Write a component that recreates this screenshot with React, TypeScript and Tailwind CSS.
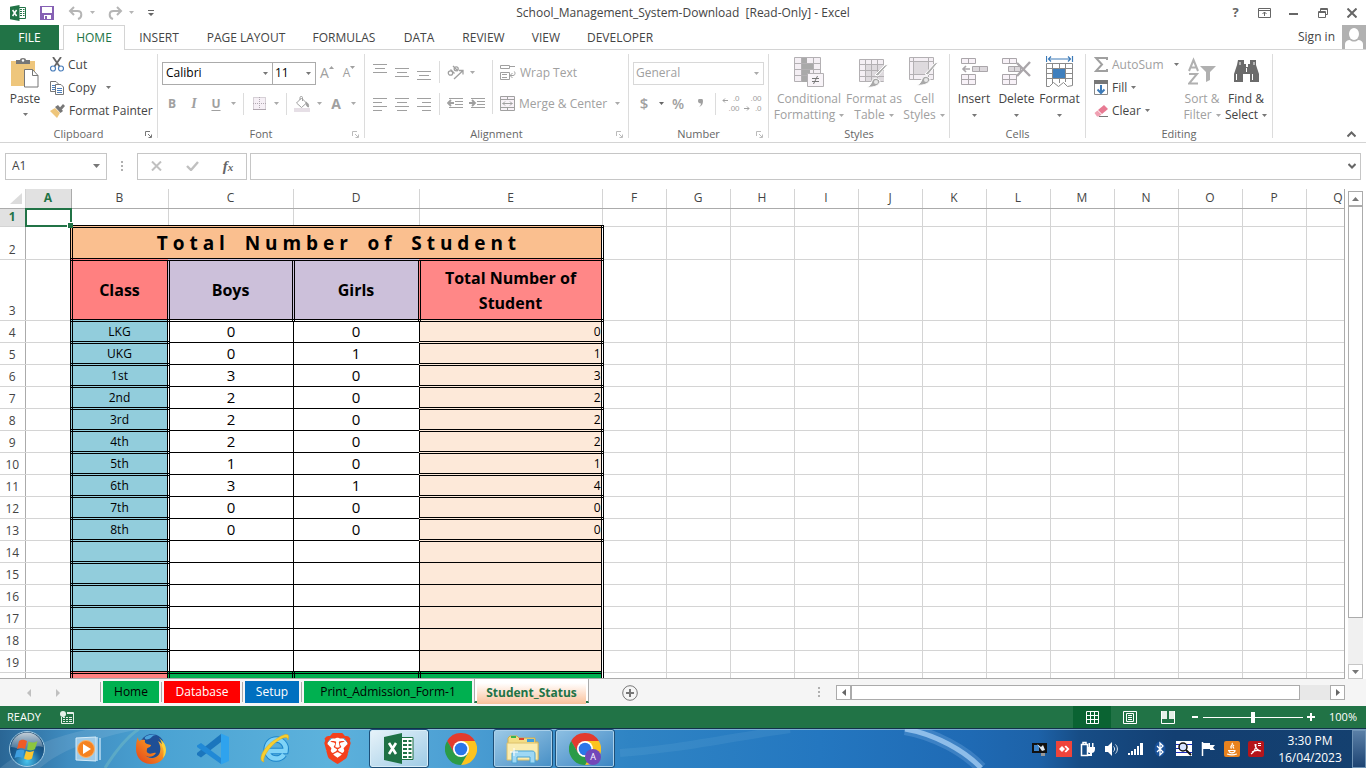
import React from 'react';
import { SiBrave } from 'react-icons/si';

const ribbonTabs = [
  { label: 'INSERT', width: 'w-[68px]' },
  { label: 'PAGE LAYOUT', width: 'w-[106px]' },
  { label: 'FORMULAS', width: 'w-[90px]' },
  { label: 'DATA', width: 'w-[60px]' },
  { label: 'REVIEW', width: 'w-[69px]' },
  { label: 'VIEW', width: 'w-[56px]' },
  { label: 'DEVELOPER', width: 'w-[92px]' },
];

const students = [
  { name: 'LKG', boys: 0, girls: 0, total: 0 },
  { name: 'UKG', boys: 0, girls: 1, total: 1 },
  { name: '1st', boys: 3, girls: 0, total: 3 },
  { name: '2nd', boys: 2, girls: 0, total: 2 },
  { name: '3rd', boys: 2, girls: 0, total: 2 },
  { name: '4th', boys: 2, girls: 0, total: 2 },
  { name: '5th', boys: 1, girls: 0, total: 1 },
  { name: '6th', boys: 3, girls: 1, total: 4 },
  { name: '7th', boys: 0, girls: 0, total: 0 },
  { name: '8th', boys: 0, girls: 0, total: 0 },
];

const emptyRows = [14, 15, 16, 17, 18, 19];
const extraCols = ['F', 'G', 'H', 'I', 'J', 'K', 'L', 'M', 'N', 'O', 'P', 'Q'];

const Caret = ({ className = 'text-[#777]' }: { className?: string }) => (
  <svg width="5" height="3" viewBox="0 0 5 3" className={`shrink-0 ${className}`}>
    <path d="M0 0h5L2.5 3z" fill="currentColor" />
  </svg>
);

const Divider = ({ className = 'h-[22px]' }: { className?: string }) => (
  <div className={`w-px shrink-0 bg-[#dcdcdc] ${className}`} />
);

interface ToolProps {
  label: string;
  width?: string;
  children: React.ReactNode;
}

const Tool = ({ label, width = 'w-[22px]', children }: ToolProps) => (
  <button aria-label={label} className={`flex h-[22px] shrink-0 items-center justify-center text-[#a0a0a0] ${width}`}>
    {children}
  </button>
);

const DropCaret = ({ label, dark = false }: { label: string; dark?: boolean }) => (
  <Tool label={label} width="w-3">
    <Caret className={dark ? 'text-[#666]' : 'text-[#aaa]'} />
  </Tool>
);

interface GroupProps {
  title: string;
  width: string;
  launcher?: 'on' | 'off';
  children: React.ReactNode;
}

const Group = ({ title, width, launcher, children }: GroupProps) => (
  <section className={`flex shrink-0 pt-1 ${width}`}>
    <div className="flex min-w-0 flex-1 flex-col">
      <div className="h-[74px]">{children}</div>
      <div className="flex h-3 items-center px-1">
        <span className="w-2" />
        <span className="flex-1 text-center text-[11px] leading-3 text-[#666]">{title}</span>
        <span className="w-2">
          {launcher && (
            <button aria-label={`${title} settings`} className={`block ${launcher === 'on' ? 'text-[#777]' : 'text-[#bbb]'}`}>
              <svg width="7" height="7" viewBox="0 0 7 7" fill="none" stroke="currentColor">
                <path d="M0.5 5V0.500H5M3 3l3 3M6.500 3.500v3h-3" />
              </svg>
            </button>
          )}
        </span>
      </div>
    </div>
    <Divider className="h-[84px]" />
  </section>
);

interface BigButtonProps {
  width: string;
  icon: React.ReactNode;
  line1: string;
  line2?: string;
  disabled?: boolean;
}

const BigButton = ({ width, icon, line1, line2, disabled }: BigButtonProps) => (
  <button className={`flex shrink-0 flex-col items-center pt-[2px] text-[12px] leading-4 ${width} ${disabled ? 'text-[#a0a0a0]' : 'text-[#444]'}`}>
    <span className="flex h-[35px] items-start">{icon}</span>
    <span className="whitespace-nowrap">{line1}</span>
    <span className="flex h-4 items-center gap-1 whitespace-nowrap">
      {line2}
      <Caret className={disabled ? 'text-[#aaa]' : 'text-[#777]'} />
    </span>
  </button>
);

const Lines = ({ rows }: { rows: [number, number, number][] }) => (
  <svg width="14" height="16" viewBox="0 0 14 16" stroke="currentColor">
    {rows.map(([x1, x2, y]) => (
      <path key={y} d={`M${x1} ${y + 0.5}H${x2}`} />
    ))}
  </svg>
);

/* ---------- Title bar ---------- */

const ExcelMark = () => (
  <svg width="16" height="16" viewBox="0 0 16 16">
    <path d="M9 2.5h6.5v11H9" fill="#fff" stroke="#217346" />
    <path d="M10 4.5h2M13 4.5h1.500M10 6.500h2M13 6.500h1.500M10 8.500h2M13 8.500h1.500M10 10.500h2M13 10.500h1.500" stroke="#217346" />
    <path d="M0 1.800L9.500 0v16L0 14.200z" fill="#217346" />
    <path d="M2.600 5l4 6M6.600 5l-4 6" stroke="#fff" strokeWidth="1.500" />
  </svg>
);

const TitleBar = () => (
  <header className="grid h-[25px] grid-cols-[1fr_auto_1fr] items-center">
    <div className="flex items-center pl-[10px] text-[#b5b5b5]">
      <ExcelMark />
      <button aria-label="Save" className="ml-[14px]">
        <svg width="14" height="14" viewBox="0 0 14 14">
          <path d="M0 0h14v14H0z" fill="#8661b4" />
          <path d="M2 1h10v6H2zM4 9h7v4H4z" fill="#fff" />
          <path d="M5 10h2v3H5z" fill="#8661b4" />
        </svg>
      </button>
      <button aria-label="Undo" className="ml-[14px]">
        <svg width="16" height="14" viewBox="0 0 16 14" fill="none" stroke="currentColor" strokeWidth="2">
          <path d="M6 1L2 5l4 4M2 5h7.500c5 0 5 6.500 0.500 8" />
        </svg>
      </button>
      <button aria-label="Undo list" className="ml-1 p-[2px]"><Caret className="text-[#b5b5b5]" /></button>
      <button aria-label="Redo" className="ml-[10px]">
        <svg width="16" height="14" viewBox="0 0 16 14" fill="none" stroke="currentColor" strokeWidth="2">
          <path d="M10 1l4 4-4 4M14 5H6.500c-5 0-5 6.500-0.500 8" />
        </svg>
      </button>
      <button aria-label="Redo list" className="ml-1 p-[2px]"><Caret className="text-[#b5b5b5]" /></button>
      <button aria-label="Customize toolbar" className="ml-[10px] p-[2px] text-[#666]">
        <svg width="6" height="6" viewBox="0 0 6 6"><path d="M0 0h6v1H0zM0 3h6L3 6z" fill="currentColor" /></svg>
      </button>
    </div>
    <h1 className="text-[12px] whitespace-pre text-[#444]">School_Management_System-Download  [Read-Only] - Excel</h1>
    <div className="flex justify-end text-[#666]">
      <button aria-label="Help" className="flex h-6 w-[29px] items-center justify-center text-[13px] font-bold">?</button>
      <button aria-label="Ribbon display options" className="flex h-6 w-[29px] items-center justify-center">
        <svg width="13" height="10" viewBox="0 0 13 10" fill="none" stroke="currentColor">
          <path d="M0.500 0.500h12v9H0.500zM1 2.500h11M6.500 8V4M4.500 6l2-2 2 2" />
        </svg>
      </button>
      <button aria-label="Minimize" className="flex h-6 w-[29px] items-center justify-center">
        <svg width="9" height="10" viewBox="0 0 9 10"><path d="M0 5h9v2H0z" fill="currentColor" /></svg>
      </button>
      <button aria-label="Restore" className="flex h-6 w-[29px] items-center justify-center">
        <svg width="10" height="10" viewBox="0 0 10 10" fill="none" stroke="currentColor">
          <path d="M2.500 3V0.500h7v6H7.500M0.500 3.500h7v6h-7zM2 1.500h8M0 4.500h8" />
        </svg>
      </button>
      <button aria-label="Close" className="flex h-6 w-[29px] items-center justify-center">
        <svg width="10" height="10" viewBox="0 0 10 10" stroke="currentColor" strokeWidth="2"><path d="M0.500 0.500l9 9M9.500 0.500l-9 9" /></svg>
      </button>
    </div>
  </header>
);

const RibbonTabs = () => (
  <nav className="flex h-[25px] text-[12px] text-[#444]">
    <button className="w-[59px] bg-[#217346] text-white">FILE</button>
    <div className="w-1 border-b border-[#d4d4d4]" />
    <button className="w-[62px] border border-b-0 border-[#d4d4d4] text-[#217346]">HOME</button>
    {ribbonTabs.map((tab) => (
      <button key={tab.label} className={`border-b border-[#d4d4d4] pt-[2px] whitespace-nowrap ${tab.width}`}>{tab.label}</button>
    ))}
    <div className="flex flex-1 items-center justify-end border-b border-[#d4d4d4]">
      <button className="mr-[7px]">Sign in</button>
      <svg width="24" height="24" viewBox="0 0 24 24">
        <path d="M0 0h24v24H0z" fill="#b1b1b1" />
        <ellipse cx="12" cy="9" rx="5" ry="6" fill="#fff" />
        <path d="M3 24v-5c0-2 2-4 5-4 2 2 6 2 8 0 3 0 5 2 5 4v5z" fill="#fff" />
      </svg>
    </div>
  </nav>
);

/* ---------- Ribbon groups ---------- */

const ClipboardGroup = () => (
  <Group title="Clipboard" width="w-[158px]" launcher="on">
    <div className="flex">
      <button className="flex w-[50px] flex-col items-center pt-1 text-[12px] leading-4 text-[#444]">
        <svg width="28" height="30" viewBox="0 0 28 30">
          <path d="M0 3h24v25H0z" fill="#eec67c" />
          <path d="M5 6V2h4a3 2 0 0 1 6 0h4v4z" fill="#777" />
          <circle cx="12" cy="2.500" r="1.200" fill="#fff" />
          <path d="M13.500 11.500h8l5.500 6v11.500H13.500z" fill="#fff" stroke="#777" />
          <path d="M21.500 11.500v6H27" fill="none" stroke="#777" />
        </svg>
        <span className="mt-[3px]">Paste</span>
        <span className="flex h-[14px] items-center"><Caret /></span>
      </button>
      <div className="flex flex-col text-[12px] text-[#444]">
        <button className="flex h-[21px] items-center gap-1">
          <svg width="14" height="15" viewBox="0 0 14 15" fill="none">
            <path d="M3 0l6.500 9.500M11 0L4.500 9.500" stroke="#666" strokeWidth="1.800" />
            <circle cx="3" cy="11.500" r="2.500" stroke="#4a7ebb" strokeWidth="1.200" />
            <circle cx="11" cy="11.500" r="2.500" stroke="#4a7ebb" strokeWidth="1.200" />
          </svg>
          Cut
        </button>
        <button className="flex h-[25px] items-center gap-1">
          <svg width="14" height="14" viewBox="0 0 14 14" fill="#fff">
            <path d="M0.500 0.500H6L8.500 3v7.500h-8z" stroke="#777" />
            <path d="M2 4.500h4M2 6.500h4M2 8.500h4" stroke="#4a7ebb" />
            <path d="M5.500 3.500H11L13.500 6v7.500h-8z" stroke="#777" />
            <path d="M7 7.500h5M7 9.500h5M7 11.500h5" stroke="#4a7ebb" />
          </svg>
          Copy
          <Caret className="ml-[6px] text-[#777]" />
        </button>
        <button className="flex h-[21px] items-center gap-1 whitespace-nowrap">
          <svg width="15" height="14" viewBox="0 0 15 14">
            <path d="M0 7l5-3 5 5-3 5z" fill="#eec67c" />
            <path d="M5 3l3-2 5 6-2.500 2z" fill="#777" />
            <path d="M9.500 4L13 0l2 2-3.500 4z" fill="#777" />
          </svg>
          Format Painter
        </button>
      </div>
    </div>
  </Group>
);

const FontGroup = () => (
  <Group title="Font" width="w-[207px]" launcher="off">
    <div className="flex h-[36px] items-center pt-[2px] pl-1">
      <div className="flex h-[23px] w-[111px] items-center border border-[#ababab] pr-1">
        <select aria-label="Font name" className="min-w-0 flex-1 appearance-none pl-[3px] text-[12px] text-black outline-none">
          <option>Calibri</option>
        </select>
        <Caret />
      </div>
      <div className="-ml-px flex h-[23px] w-11 items-center border border-[#ababab] pr-1">
        <select aria-label="Font size" className="min-w-0 flex-1 appearance-none pl-[2px] text-[12px] text-black outline-none">
          <option>11</option>
        </select>
        <Caret />
      </div>
      <Tool label="Increase font size">
        <span className="text-[14px] leading-none">A</span>
        <svg width="5" height="14" viewBox="0 0 5 14"><path d="M0 3h5L2.500 0z" fill="currentColor" /></svg>
      </Tool>
      <Tool label="Decrease font size">
        <span className="text-[12px] leading-none">A</span>
        <svg width="5" height="14" viewBox="0 0 5 14"><path d="M0 0h5L2.500 3z" fill="currentColor" /></svg>
      </Tool>
    </div>
    <div className="flex h-[27px] items-center pl-[3px]">
      <Tool label="Bold"><b className="text-[12px]">B</b></Tool>
      <Tool label="Italic"><i className="font-['Liberation_Serif',serif] text-[14px] font-bold">I</i></Tool>
      <Tool label="Underline"><span className="text-[12px] font-bold underline underline-offset-2">U</span></Tool>
      <DropCaret label="Underline style" />
      <Divider className="mx-1 h-[22px]" />
      <Tool label="Borders">
        <svg width="13" height="13" viewBox="0 0 13 13" fill="none" stroke="#b0a8b0">
          <path d="M0.500 0.500h12v12H0.500z" fill="#f6f0f6" strokeDasharray="1 1" />
          <path d="M6.500 0v13M0 6.500h13" strokeDasharray="1 1" />
          <path d="M0 12.500h13" />
        </svg>
      </Tool>
      <DropCaret label="Border style" />
      <Divider className="mx-1 h-[22px]" />
      <Tool label="Fill color">
        <svg width="16" height="16" viewBox="0 0 16 16" fill="none" stroke="currentColor">
          <path d="M0 12h16v4H0z" fill="#e6dfe6" stroke="none" />
          <path d="M2.500 7l5-5 5 5-5 4.500zM6 4V1.500C6 0 8.500 0 8.500 1.500V5" />
          <path d="M12 6c2 1 3 3 2.500 5-1.500 0-2.500-2-2.500-5z" fill="currentColor" />
        </svg>
      </Tool>
      <DropCaret label="Fill color list" />
      <Tool label="Font color"><b className="text-[14px]">A</b></Tool>
      <DropCaret label="Font color list" />
    </div>
  </Group>
);

const AlignmentGroup = () => (
  <Group title="Alignment" width="w-[264px]" launcher="off">
    <div className="flex">
      <div className="w-[127px] pl-1">
        <div className="flex h-[36px] items-center">
          <Tool label="Top align"><Lines rows={[[0, 14, 0], [2, 12, 4], [0, 14, 8]]} /></Tool>
          <Tool label="Middle align"><Lines rows={[[0, 14, 4], [2, 12, 8], [0, 14, 12]]} /></Tool>
          <Tool label="Bottom align"><Lines rows={[[0, 14, 7], [2, 12, 11], [0, 14, 15]]} /></Tool>
          <Divider className="mx-1 h-[22px]" />
          <Tool label="Orientation">
            <svg width="17" height="15" viewBox="0 0 17 15" fill="none" stroke="currentColor" strokeWidth="1.300">
              <circle cx="3.500" cy="8" r="2.200" />
              <path d="M3.500 4.500l4 4M6 1l5 5" />
              <circle cx="9.200" cy="3.800" r="2" />
              <path d="M7 14l8.500-8M12 5.500h4V9.500" />
            </svg>
          </Tool>
          <DropCaret label="Orientation list" />
        </div>
        <div className="flex h-[27px] items-center">
          <Tool label="Align left"><Lines rows={[[0, 14, 2], [0, 9, 6], [0, 14, 10], [0, 9, 14]]} /></Tool>
          <Tool label="Align center"><Lines rows={[[0, 14, 2], [2, 12, 6], [0, 14, 10], [2, 12, 14]]} /></Tool>
          <Tool label="Align right"><Lines rows={[[0, 14, 2], [5, 14, 6], [0, 14, 10], [5, 14, 14]]} /></Tool>
          <Divider className="mx-1 h-[22px]" />
          <Tool label="Decrease indent">
            <svg width="16" height="12" viewBox="0 0 16 12" fill="none" stroke="currentColor">
              <path d="M2 0.500h14M8 3.500h8M8 6.500h8M2 9.500h14" />
              <path d="M7 5H1M4 2L1 5l3 3" strokeWidth="1.800" />
            </svg>
          </Tool>
          <Tool label="Increase indent">
            <svg width="16" height="12" viewBox="0 0 16 12" fill="none" stroke="currentColor">
              <path d="M2 0.500h14M8 3.500h8M8 6.500h8M2 9.500h14" />
              <path d="M0 5h6M3 2l3 3-3 3" strokeWidth="1.800" />
            </svg>
          </Tool>
        </div>
      </div>
      <Divider className="mt-[6px] h-[54px]" />
      <div className="flex-1 pl-[7px] text-[12px] text-[#a0a0a0]">
        <button className="flex h-[36px] items-center gap-1 pt-[2px]">
          <svg width="16" height="16" viewBox="0 0 16 16" fill="none" stroke="currentColor">
            <path d="M0.500 0.500h9v3h-9zM0.500 7.500h9v7h-9zM2 9.500h5M2 12.500h5M10 1.500h5M10 10.500h3c3 0 2-4 1-4M12.500 8l-2.500 2.500 2.500 2.500" />
          </svg>
          Wrap Text
        </button>
        <div className="flex h-[27px] items-center">
          <button className="flex items-center gap-1 whitespace-nowrap">
            <svg width="15" height="15" viewBox="0 0 15 15" fill="none" stroke="currentColor">
              <path d="M0.500 0.500h14v14H0.500z" fill="#f8f2f8" />
              <path d="M0 3.500h15M0 11.500h15M7.500 0v3.500M7.500 11.500V15M2.500 7.500h10M5 5.500l-2 2 2 2M10 5.500l2 2-2 2" />
            </svg>
            Merge &amp; Center
          </button>
          <span className="flex-1" />
          <DropCaret label="Merge options" />
          <span className="w-[5px]" />
        </div>
      </div>
    </div>
  </Group>
);

const NumberGroup = () => (
  <Group title="Number" width="w-[140px]" launcher="off">
    <div className="flex h-[36px] items-center pt-[2px] pl-1">
      <div className="flex h-[23px] w-[131px] items-center border border-[#d8d8d8] pr-1">
        <select aria-label="Number format" className="min-w-0 flex-1 appearance-none pl-[2px] text-[12px] text-[#a0a0a0] outline-none">
          <option>General</option>
        </select>
        <Caret className="text-[#aaa]" />
      </div>
    </div>
    <div className="flex h-[27px] items-center pl-1">
      <Tool label="Currency"><span className="text-[15px] font-semibold">$</span></Tool>
      <DropCaret label="Currency list" dark />
      <Tool label="Percent"><span className="text-[14px] font-semibold">%</span></Tool>
      <Tool label="Comma style">
        <svg width="5" height="9" viewBox="0 0 5 9"><path d="M0 2a2 2 0 0 1 5 0c0 3-1 5-4 6 1-1 2-2 2-3.500C1 4.500 0 3.500 0 2z" fill="currentColor" /></svg>
      </Tool>
      <Divider className="mx-1 h-[22px]" />
      <Tool label="Increase decimal">
        <svg width="6" height="14" viewBox="0 0 6 14" fill="none" stroke="currentColor"><path d="M6 3.500H1M3 1.500l-2 2 2 2" /></svg>
        <span className="flex flex-col items-end font-['Liberation_Sans',sans-serif] text-[8px] leading-[10px]"><span>.0</span><span>.00</span></span>
      </Tool>
      <Tool label="Decrease decimal">
        <svg width="6" height="14" viewBox="0 0 6 14" fill="none" stroke="currentColor"><path d="M0 11.500h5M3 9.500l2 2-2 2" /></svg>
        <span className="flex flex-col items-end font-['Liberation_Sans',sans-serif] text-[8px] leading-[10px]"><span>.00</span><span>.0</span></span>
      </Tool>
    </div>
  </Group>
);

const StylesGroup = () => (
  <Group title="Styles" width="w-[181px]">
    <div className="flex pl-[3px]">
      <BigButton
        width="w-[74px]"
        line1="Conditional"
        line2="Formatting"
        disabled
        icon={
          <svg width="30" height="31" viewBox="0 0 30 31" fill="none" stroke="#b3b0b3">
            <path d="M0.500 1.500h26v24H0.500z" fill="#f4eff4" />
            <path d="M8 2h5v6H8zM8 8h11v6H8zM8 14h8v6H8zM8 20h5v6H8z" fill="#a9a9a9" stroke="none" />
            <path d="M0 7.500h27M0 13.500h27M0 19.500h27M7.500 1v25M19.500 1v25" />
            <path d="M13.500 17.500h16v13h-16z" fill="#f8f4f8" />
            <path d="M18 22.500h7M18 25.500h7M23.500 20l-4 8" stroke="#777" />
          </svg>
        }
      />
      <BigButton
        width="w-[56px]"
        line1="Format as"
        line2="Table"
        disabled
        icon={
          <svg width="30" height="32" viewBox="0 0 30 32" fill="none" stroke="#b3b0b3">
            <path d="M0.500 3.500h24v22h-24z" fill="#f4eff4" />
            <path d="M7 9h18v16H7z" fill="#dedade" stroke="none" />
            <path d="M0 8.500h25M0 14.500h25M0 20.500h25M6.500 3v23M12.500 3v23M18.500 3v23" />
            <path d="M29.500 8L19 20l-3-1 10-10z" fill="#b0b0b0" stroke="#fff" />
            <path d="M8 31c3-1 4-3 5-6s5-4 8 0c0 4-6 7-13 6z" fill="#a9a9a9" stroke="#fff" />
            <circle cx="17" cy="26" r="2" fill="#e8e8e8" stroke="none" />
          </svg>
        }
      />
      <BigButton
        width="w-[44px]"
        line1="Cell"
        line2="Styles"
        disabled
        icon={
          <svg width="30" height="31" viewBox="0 0 30 31" fill="none" stroke="#b3b0b3">
            <path d="M0.500 1.500h24v22h-24z" fill="#f4eff4" />
            <path d="M5 6h15v13H5z" fill="#dedade" stroke="none" />
            <path d="M0 5.500h25M0 18.500h25M4.500 1v23M19.500 1v23" />
            <path d="M29.500 6L19 19l-3-1 10-11z" fill="#b0b0b0" stroke="#fff" />
            <path d="M8 29c3-1 4-3 5-6s5-4 8 0c0 4-6 7-13 6z" fill="#a9a9a9" stroke="#fff" />
            <circle cx="17" cy="24" r="2" fill="#e8e8e8" stroke="none" />
          </svg>
        }
      />
    </div>
  </Group>
);

const CellsGroup = () => (
  <Group title="Cells" width="w-[136px]">
    <div className="flex pl-[3px]">
      <BigButton
        width="w-[42px]"
        line1="Insert"
        icon={
          <svg width="27" height="29" viewBox="0 0 27 29" fill="none" stroke="#aaa6aa">
            <path d="M0.500 2.500h14v5h-14zM7.500 2v6M0.500 18.500h14v10h-14zM0 23.500h15M7.500 18v11" fill="#f8f2f8" />
            <path d="M11.500 10.500h15v5h-15zM18.500 10v6" fill="#dcd8dc" />
            <path d="M9 13H2M5 10l-3 3 3 3" strokeWidth="1.600" />
          </svg>
        }
      />
      <BigButton
        width="w-[43px]"
        line1="Delete"
        icon={
          <svg width="29" height="29" viewBox="0 0 29 29" fill="none" stroke="#aaa6aa">
            <path d="M0.500 2.500h14v5h-14zM7.500 2v6M0.500 18.500h14v10h-14zM0 23.500h15M7.500 18v11" fill="#f8f2f8" />
            <path d="M6.500 10.500h12v5h-12zM12.500 10v6" fill="#dcd8dc" />
            <path d="M15 7l13 13M28 6L15 20" strokeWidth="2.400" />
          </svg>
        }
      />
      <BigButton
        width="w-[43px]"
        line1="Format"
        icon={
          <svg width="28" height="32" viewBox="0 0 28 32" fill="none" stroke="#8a8a8a">
            <path d="M0.500 0v6M26.500 0v6M2 3h23M5 0.500L2.500 3 5 5.500M22 0.500L24.500 3 22 5.500" stroke="#3c7ab8" strokeWidth="1.200" />
            <path d="M0.500 7.500h26v22l-5 1-4-4-5 4-5-4-4 4h-3z" fill="#fff" />
            <path d="M7 12h12v10H7z" fill="#3f7fbd" stroke="none" />
            <path d="M0 12.500h27M0 17.500h7M19 17.500h8M0 22.500h27M6.500 8v19M19.500 8v18M13.500 8v4M13.500 22v5" />
          </svg>
        }
      />
    </div>
  </Group>
);

const EditingGroup = () => (
  <Group title="Editing" width="w-[187px]">
    <div className="flex">
      <div className="flex w-[94px] flex-col pl-[8px] text-[12px] text-[#444]">
        <button className="flex h-[21px] items-center gap-1 text-[#a0a0a0]">
          <svg width="14" height="15" viewBox="0 0 14 15" fill="none" stroke="currentColor" strokeWidth="2">
            <path d="M13 3V1H2l6 6.500L2 14h11v-2" />
          </svg>
          AutoSum
          <Caret className="ml-[6px] text-[#777]" />
        </button>
        <button className="flex h-[25px] items-center gap-1">
          <svg width="14" height="15" viewBox="0 0 14 15" fill="none">
            <path d="M0.500 0.500h13v14H0.500z" stroke="#888" />
            <path d="M0 0h14v4H0z" fill="#777" />
            <path d="M7 5v8M3.500 9.500L7 13l3.500-3.500" stroke="#3c7ab8" strokeWidth="2" />
          </svg>
          Fill
          <Caret />
        </button>
        <button className="flex h-[21px] items-center gap-1">
          <svg width="14" height="12" viewBox="0 0 14 12">
            <path d="M4 5l6-5 4 4-6 5z" fill="#e87a93" />
            <path d="M0.500 8L3.500 5.500l4 4L5 11.500H3z" fill="#f0a0b2" />
            <path d="M5 11.500h9" stroke="#777" />
          </svg>
          Clear
          <Caret />
        </button>
      </div>
      <BigButton
        width="w-[44px]"
        line1="Sort &amp;"
        line2="Filter"
        disabled
        icon={
          <svg width="28" height="30" viewBox="0 0 28 30" fill="none" stroke="#b0b0b0" strokeWidth="2">
            <path d="M1 15L5.500 4 10 15M2.500 11.500h6M1 18h8L1 27.500h9" />
            <path d="M12 10h16l-6 6v8l-4 2V16z" fill="#b0b0b0" stroke="none" />
          </svg>
        }
      />
      <BigButton
        width="w-[44px]"
        line1="Find &amp;"
        line2="Select"
        icon={
          <svg width="27" height="28" viewBox="0 0 27 28">
            <path d="M5 4h6v4h2v3h2V8h2V4h6v5l3 9v8h-9v-8h-7v8H1v-8l3-9z" fill="#6b6b6b" />
            <path d="M7 6v3M21 6v3M3.500 18v6M19.500 18v6M13.500 12v4" stroke="#fff" />
          </svg>
        }
      />
    </div>
  </Group>
);

const Ribbon = () => (
  <div className="flex h-[93px] border-b border-[#d4d4d4]">
    <ClipboardGroup />
    <FontGroup />
    <AlignmentGroup />
    <NumberGroup />
    <StylesGroup />
    <CellsGroup />
    <EditingGroup />
    <div className="flex flex-1 items-end justify-end p-[10px] pb-1">
      <button aria-label="Collapse ribbon" className="text-[#666]">
        <svg width="9" height="8" viewBox="0 0 9 8" fill="none" stroke="currentColor" strokeWidth="2"><path d="M0.500 6.500l4-4 4 4" /></svg>
      </button>
    </div>
  </div>
);

const Dots = () => (
  <svg width="3" height="13" viewBox="0 0 3 13" className="shrink-0"><path d="M0 1h2v2H0zM0 5h2v2H0zM0 9h2v2H0z" fill="#b0b0b0" /></svg>
);

const FormulaBar = () => (
  <div className="flex h-[46px] items-center pr-[5px] pl-[5px]">
    <div className="flex h-[27px] w-[102px] items-center border border-[#c6c6c6] pr-[6px]">
      <input aria-label="Name box" defaultValue="A1" className="min-w-0 flex-1 pl-[6px] text-[12px] text-[#444] outline-none" />
      <svg width="7" height="4" viewBox="0 0 7 4"><path d="M0 0h7L3.500 4z" fill="#777" /></svg>
    </div>
    <div className="flex w-[30px] justify-center"><Dots /></div>
    <div className="flex h-[27px] w-[110px] items-center border border-[#c6c6c6]">
      <button aria-label="Cancel" className="flex flex-1 justify-center">
        <svg width="11" height="10" viewBox="0 0 11 10" stroke="#c0c0c0" strokeWidth="2"><path d="M1 0.500l9 9M10 0.500l-9 9" /></svg>
      </button>
      <button aria-label="Enter" className="flex flex-1 justify-center">
        <svg width="13" height="10" viewBox="0 0 13 10" fill="none" stroke="#c0c0c0" strokeWidth="2.400"><path d="M1 5l4 4L12 1" /></svg>
      </button>
      <button aria-label="Insert function" className="flex-1 font-['Liberation_Serif',serif] text-[15px] leading-none font-bold text-[#666] italic">
        f<span className="text-[11px]">x</span>
      </button>
    </div>
    <div className="ml-[3px] flex h-[27px] flex-1 items-center border border-[#c6c6c6] pr-1">
      <input aria-label="Formula" className="min-w-0 flex-1 px-2 text-[12px] outline-none" />
      <svg width="8" height="6" viewBox="0 0 8 6" fill="none" stroke="#666" strokeWidth="2"><path d="M0.500 1L4 4.500 7.500 1" /></svg>
    </div>
  </div>
);

/* ---------- Sheet ---------- */

const gridCell = 'border border-[#d4d4d4]';
const colHead = 'border border-t-0 border-[#d4d4d4] border-b-[#ababab] p-0 font-normal';
const classCell = 'border-[3px] border-double border-black bg-[#92cddc] p-0 pt-[2px] text-center text-[12px] leading-4';
const countCell = 'border border-black p-0 pb-px text-center text-[15px] leading-4';

const RowHead = ({ n }: { n?: number }) => (
  <th className="border border-l-0 border-[#d4d4d4] border-r-[#ababab] p-0 pb-px text-center align-bottom text-[12px] leading-4 font-normal text-[#444]">{n}</th>
);

const ExtraCells = () => (
  <>
    {extraCols.map((col) => (
      <td key={col} className={gridCell} />
    ))}
  </>
);

const Sheet = () => (
  <table className="w-[1370px] table-fixed border-collapse bg-white text-black">
    <colgroup>
      <col className="w-[25px]" />
      <col className="w-[46px]" />
      <col className="w-[97px]" />
      <col className="w-[125px]" />
      <col className="w-[126px]" />
      <col className="w-[183px]" />
      {extraCols.map((col) => (
        <col key={col} className="w-[64px]" />
      ))}
    </colgroup>
    <thead>
      <tr className="h-[19px] text-[12px] leading-4 text-[#444]">
        <th className={`${colHead} border-l-0`}>
          <svg width="12" height="11" viewBox="0 0 12 11" className="ml-[10px]"><path d="M12 0v11H0z" fill="#dcdcdc" /></svg>
        </th>
        <th className="border border-t-0 border-[#ababab] bg-[#e1e1e1] p-0 font-bold text-[#217346]">A</th>
        {['B', 'C', 'D', 'E', ...extraCols].map((col) => (
          <th key={col} className={colHead}>{col}</th>
        ))}
      </tr>
    </thead>
    <tbody>
      <tr className="h-[18px]">
        <th className="border border-l-0 border-[#d4d4d4] border-r-[#ababab] bg-[#e1e1e1] p-0 text-[12px] leading-[14px] font-bold text-[#217346]">1</th>
        <td className={`relative p-0 ${gridCell}`}>
          {/* active cell outline with its fill handle */}
          <div className="absolute -inset-px border-2 border-[#217346]" />
          <div className="absolute -right-[2px] -bottom-[2px] z-10 h-[6px] w-[6px] border-t border-l border-white bg-[#217346]" />
        </td>
        <td className={gridCell} />
        <td className={gridCell} />
        <td className={gridCell} />
        <td className={gridCell} />
        <ExtraCells />
      </tr>
      <tr className="h-[33px]">
        <RowHead n={2} />
        <td className={gridCell} />
        <td colSpan={4} className="border-[3px] border-double border-black bg-[#fabf8f] p-0 text-center text-[19px] leading-6 font-bold whitespace-pre">
          T o t a l    N u m b e r    o f    S t u d e n t
        </td>
        <ExtraCells />
      </tr>
      <tr className="h-[61px] text-[16px] leading-[25px] font-bold">
        <RowHead n={3} />
        <td className={gridCell} />
        <td className="border-[3px] border-double border-black bg-[#ff8080] p-0 pt-[2px] text-center">Class</td>
        <td className="border-[3px] border-double border-black bg-[#ccc0da] p-0 pt-[2px] text-center">Boys</td>
        <td className="border-[3px] border-double border-black bg-[#ccc0da] p-0 pt-[2px] text-center">Girls</td>
        <td className="border-[3px] border-double border-black bg-[#ff8787] p-0 pt-[2px] text-center">Total Number of<br />Student</td>
        <ExtraCells />
      </tr>
      {students.map((s, i) => (
        <tr key={s.name} className="h-[22px]">
          <RowHead n={i + 4} />
          <td className={gridCell} />
          <td className={classCell}>{s.name}</td>
          <td className={countCell}>{s.boys}</td>
          <td className={countCell}>{s.girls}</td>
          <td className="border-y-[3px] border-r-[3px] border-l border-double border-black bg-[#fde9d9] p-0 pt-[2px] text-right text-[12px] leading-4 [border-left-style:solid]">{s.total}</td>
          <ExtraCells />
        </tr>
      ))}
      {emptyRows.map((n) => (
        <tr key={n} className="h-[22px]">
          <RowHead n={n} />
          <td className={gridCell} />
          <td className={classCell} />
          <td className={countCell} />
          <td className={countCell} />
          <td className="border border-r-[3px] border-black bg-[#fde9d9] [border-right-style:double]" />
          <ExtraCells />
        </tr>
      ))}
      <tr className="h-[22px]">
        <RowHead />
        <td className={gridCell} />
        <td className="border-[3px] border-double border-black bg-[#ff8080]" />
        <td className="border-[3px] border-double border-black bg-[#00b050]" />
        <td className="border-[3px] border-double border-black bg-[#00b050]" />
        <td className="border-[3px] border-double border-black bg-[#00b050]" />
        <ExtraCells />
      </tr>
    </tbody>
  </table>
);

const VerticalScroll = () => (
  <div className="flex w-[21px] shrink-0 flex-col items-center pt-[2px] pr-px">
    <button aria-label="Scroll up" className="flex h-[15px] w-[15px] shrink-0 items-center justify-center border border-[#ababab]">
      <svg width="7" height="4" viewBox="0 0 7 4"><path d="M0 4h7L3.500 0z" fill="#777" /></svg>
    </button>
    <div className="w-[15px] flex-1 bg-[#f0f0f0]">
      <div className="h-[90%] border border-[#ababab] bg-white" />
    </div>
    <button aria-label="Scroll down" className="flex h-[15px] w-[15px] shrink-0 items-center justify-center border border-[#c6c6c6]">
      <svg width="7" height="4" viewBox="0 0 7 4"><path d="M0 0h7L3.500 4z" fill="#777" /></svg>
    </button>
  </div>
);

const sheetTabs = [
  { label: 'Home', style: 'w-[56px] bg-[#00b050] text-black' },
  { label: 'Database', style: 'w-[76px] bg-[#ff0000] text-white' },
  { label: 'Setup', style: 'w-[54px] bg-[#0070c0] text-white' },
  { label: 'Print_Admission_Form-1', style: 'w-[168px] bg-[#00b050] text-black' },
];

const SheetBar = () => (
  <div className="flex h-[27px] bg-[#f5f5f5]">
    <div className="flex w-[100px] items-center gap-[25px] pl-[27px] text-[#c0c0c0]">
      <button aria-label="Previous sheet"><svg width="4" height="8" viewBox="0 0 4 8"><path d="M4 0v8L0 4z" fill="currentColor" /></svg></button>
      <button aria-label="Next sheet"><svg width="4" height="8" viewBox="0 0 4 8"><path d="M0 0v8l4-4z" fill="currentColor" /></svg></button>
    </div>
    <div className="flex pt-[2px]">
      {sheetTabs.map((tab) => (
        <div key={tab.label} className="flex h-[22px] gap-[2px] pr-[2px]">
          <div className="h-5 w-px self-center bg-[#ababab]" />
          <button className={`text-[12px] whitespace-nowrap ${tab.style}`}>{tab.label}</button>
        </div>
      ))}
    </div>
    <div className="h-6 w-[115px] border-r border-b-2 border-l border-r-[#ababab] border-b-[#217346] border-l-[#ababab] bg-white px-[2px] pb-px">
      <button className="h-full w-full bg-linear-to-b from-white to-[#f9c09a] text-[12px] font-bold text-[#217346]">Student_Status</button>
    </div>
    <button aria-label="New sheet" className="ml-[33px]">
      <svg width="16" height="16" viewBox="0 0 16 16" fill="none" stroke="#777">
        <circle cx="8" cy="8" r="7.300" />
        <path d="M8 4v8M4 8h8" strokeWidth="2" />
      </svg>
    </button>
    <div className="flex flex-1 items-center justify-end pr-[21px]">
      <Dots />
      <button aria-label="Scroll left" className="ml-[15px] flex h-[15px] w-[15px] items-center justify-center border border-[#ababab] bg-white">
        <svg width="4" height="7" viewBox="0 0 4 7"><path d="M4 0v7L0 3.500z" fill="#666" /></svg>
      </button>
      <div className="h-[15px] w-[479px] bg-[#e8e8e8]">
        <div className="h-full w-[449px] border border-[#ababab] bg-white" />
      </div>
      <button aria-label="Scroll right" className="flex h-[15px] w-[15px] items-center justify-center border border-[#ababab] bg-white">
        <svg width="4" height="7" viewBox="0 0 4 7"><path d="M0 0v7l4-3.500z" fill="#666" /></svg>
      </button>
    </div>
  </div>
);

const StatusBar = () => (
  <footer className="flex h-[22px] items-center bg-[#217346] text-[11px] text-white">
    <span className="w-[53px] pl-[7px]">READY</span>
    <button aria-label="Record macro" className="ml-[7px]">
      <svg width="14" height="13" viewBox="0 0 14 13" fill="none" stroke="#e4efe8">
        <path d="M1.500 6v6.500h12V1.500H7M7 2.500h6M3 6.500h9M3 8.500h9M3 10.500h9" />
        <circle cx="3" cy="3" r="3" fill="#e4efe8" stroke="none" />
        <path d="M5.500 5v7M8.500 5v7" stroke="#217346" />
      </svg>
    </button>
    <div className="flex-1" />
    <button aria-label="Normal view" className="flex h-[22px] w-[38px] items-center justify-center bg-[#0a6332]">
      <svg width="13" height="13" viewBox="0 0 13 13" fill="none" stroke="#fff"><path d="M0.500 0.500h12v12H0.500zM4.500 0v13M8.500 0v13M0 4.500h13M0 8.500h13" /></svg>
    </button>
    <button aria-label="Page layout view" className="flex w-[38px] justify-center">
      <svg width="14" height="13" viewBox="0 0 14 13" fill="none" stroke="#fff"><path d="M0.500 0.500h13v12H0.500zM3.500 2.500h7v8h-7zM5 4.500h4M5 6.500h4M5 8.500h4" /></svg>
    </button>
    <button aria-label="Page break preview" className="flex w-[38px] justify-center">
      <svg width="14" height="13" viewBox="0 0 14 13"><path d="M1 0h5v8H1zM8 0h5v8H8z" fill="#e4efe8" /><path d="M0.500 0v12.500h13V0" fill="none" stroke="#fff" /></svg>
    </button>
    <button aria-label="Zoom out" className="flex w-4 justify-center"><svg width="6" height="2"><path d="M0 0h6v2H0z" fill="#fff" /></svg></button>
    <input
      type="range"
      aria-label="Zoom"
      defaultValue={50}
      className="h-3 w-[100px] appearance-none bg-transparent [&::-webkit-slider-runnable-track]:h-px [&::-webkit-slider-runnable-track]:bg-white [&::-webkit-slider-thumb]:-mt-[5px] [&::-webkit-slider-thumb]:h-[11px] [&::-webkit-slider-thumb]:w-1 [&::-webkit-slider-thumb]:appearance-none [&::-webkit-slider-thumb]:bg-white"
    />
    <button aria-label="Zoom in" className="flex w-4 justify-center"><svg width="8" height="8"><path d="M3 0h2v3h3v2H5v3H3V5H0V3h3z" fill="#fff" /></svg></button>
    <button className="w-[47px] pr-[9px] text-right">100%</button>
  </footer>
);

/* ---------- Taskbar ---------- */

const ChromeLogo = ({ badge }: { badge?: string }) => (
  <svg width="32" height="32" viewBox="0 0 32 32">
    <path d="M2.140 8A16 16 0 0 1 29.860 8H16L9.070 20z" fill="#e33b2e" />
    <path d="M29.860 8A16 16 0 0 1 16 32L22.930 20 16 8z" fill="#fcc31e" />
    <path d="M16 32A16 16 0 0 1 2.140 8L9.070 20h13.860z" fill="#2b9b47" />
    <circle cx="16" cy="16" r="8" fill="#fff" />
    <circle cx="16" cy="16" r="6.300" fill="#2b76e8" />
    {badge && (
      <>
        <circle cx="24" cy="24" r="8" fill="#7248b9" />
        <text x="24" y="27" textAnchor="middle" fontSize="9" fill="#fff">{badge}</text>
      </>
    )}
  </svg>
);

const StartOrb = () => (
  <svg width="38" height="38" viewBox="0 0 38 38">
    <defs>
      <radialGradient id="orb" cx="0.5" cy="0.85" r="0.8">
        <stop offset="0" stopColor="#49c4ee" />
        <stop offset="0.5" stopColor="#1c5f94" />
        <stop offset="1" stopColor="#123f66" />
      </radialGradient>
      <linearGradient id="shine" x1="0" y1="0" x2="0" y2="1">
        <stop offset="0" stopColor="#fff" stopOpacity="0.75" />
        <stop offset="1" stopColor="#fff" stopOpacity="0.15" />
      </linearGradient>
    </defs>
    <circle cx="19" cy="19" r="17.500" fill="url(#orb)" stroke="#a5cde4" />
    <path d="M3 17C4 8 11 2.500 19 2.500S34 8 35 17c-8-3-12 3-18 3S8 17 3 17z" fill="url(#shine)" />
    <path d="M11 11c3-2 5-1.500 8 0l-2 8c-3-1.500-5-1.500-8 0z" fill="#ee5b26" />
    <path d="M20.500 11.500c3 1.500 6 1.500 9-0.500l-2.500 8c-3 2-5 1.500-8 0.500z" fill="#8cc63f" />
    <path d="M8.500 20.500c3-1.500 5-1.500 8 0l-2 7.500c-3-1.500-5-1.500-8 0z" fill="#3f9fe0" />
    <path d="M18 21c3 1 5 1.500 8-0.500l-2 8c-3 2-5 1.500-8 0z" fill="#fdc62f" />
  </svg>
);

const MediaPlayer = () => (
  <svg width="28" height="28" viewBox="0 0 28 28">
    <path d="M1 3l20-1v24L1 25z" fill="#9fcbe8" stroke="#d5ebf8" />
    <path d="M22 2v24M25 3v22" stroke="#b9dcf2" strokeWidth="1.500" />
    <circle cx="11" cy="14" r="8.500" fill="#f58220" stroke="#fbb36b" />
    <path d="M8 9l8 5-8 5z" fill="#fff" />
  </svg>
);

const Firefox = () => (
  <svg width="32" height="32" viewBox="0 0 32 32">
    <defs>
      <linearGradient id="fox" x1="0" y1="1" x2="1" y2="0">
        <stop offset="0" stopColor="#e2401b" />
        <stop offset="0.6" stopColor="#f58a1f" />
        <stop offset="1" stopColor="#fee14b" />
      </linearGradient>
    </defs>
    <circle cx="17" cy="13" r="12" fill="#1f4f96" />
    <path d="M10 4c3-2 7-3 11-2-4 0-4 3-7 4s-5 0-4-2z" fill="#4aa3dc" />
    <path d="M3 4c0 2 0.500 3 1.500 4C6 6.500 8 6.500 10 7c-0.500 2 0 3 2 4l4 1c0 2-3 2.500-4 3.500 0 2-1 3 1 4.500 3 2 5-1 8 0-2 4-8 5-11 2 4 5 13 4 15-3 1-4 0-8-2-11 4 2 6 5 7 9C31 25 25 31 16 31 7 31 1 24.500 1 16 1 11 1.500 7 3 4z" fill="url(#fox)" />
    <path d="M24 5c4 3 7 7 7 12 0 3-1 6-3 8 1-5 1-9-1-12 0-3-1-6-3-8z" fill="#fbd23a" />
  </svg>
);

const CodeLogo = () => (
  <svg width="32" height="32" viewBox="0 0 32 32">
    <path d="M24 1v8L4 24.500 0 22v-2z" fill="#1b76bd" />
    <path d="M0 12.500L4 10l20 15v6L0 14z" fill="#2189d6" />
    <path d="M24 0.500l8 3.500v24l-8 3.500z" fill="#2fa3ee" />
  </svg>
);

const ExplorerE = () => (
  <svg width="32" height="32" viewBox="0 0 32 32" fill="none">
    <path d="M25 21.500A9.500 9.500 0 1 1 26.500 18H9" stroke="#1d86cc" strokeWidth="6.500" />
    <path d="M25 21.500A9.500 9.500 0 1 1 26.500 18H9" stroke="#7fd3f7" strokeWidth="4.500" />
    <path d="M5 29c-7-1-1-14 9-21S32-2 29 7c0-5-7-2-13 3S3 25 5 29z" fill="#f8cf2f" stroke="#e0a81a" strokeWidth="0.500" />
  </svg>
);

const ExcelLogo = () => (
  <svg width="30" height="31" viewBox="0 0 30 31">
    <path d="M17 4.500h12v22H17" fill="#fff" stroke="#1e7145" />
    <path d="M19 8h4M24.500 8h3M19 12h4M24.500 12h3M19 16h4M24.500 16h3M19 20h4M24.500 20h3M19 24h4M24.500 24h3" stroke="#1e7145" strokeWidth="2" />
    <path d="M0 4l18-4v31L0 27z" fill="#1e7145" />
    <path d="M5 10l7 11M12 10L5 21" stroke="#fff" strokeWidth="2.600" />
  </svg>
);

const FolderLogo = () => (
  <svg width="34" height="30" viewBox="0 0 34 30">
    <path d="M2 4l2-2h7l2 2h16v4h3v17H2z" fill="#f3dd86" stroke="#cfae4e" />
    <path d="M5 2h5v2H5z" fill="#39b54a" />
    <path d="M13 4h5v2h-5z" fill="#e0442c" />
    <path d="M21 5h7v3h-7z" fill="#3f9fe0" />
    <path d="M1 9h31v17H1z" fill="#faecb0" stroke="#dcc06a" />
    <path d="M6 29v-9c0-2 1-3 3-3h17c2 0 3 1 3 3v9h-5v-6H11v6z" fill="#9ed8f4" stroke="#4ba3d3" />
    <path d="M8 14v8M4 18h8" stroke="#fff" />
  </svg>
);

const BraveLogo = () => (
  <span className="flex bg-[radial-gradient(circle,white_50%,transparent_52%)]">
    <SiBrave size={31} color="#f4401c" />
  </span>
);

const taskItems = [
  { label: 'Windows Media Player', icon: <MediaPlayer />, frame: 'border-transparent' },
  { label: 'Firefox', icon: <Firefox />, frame: 'border-transparent' },
  { label: 'Visual Studio Code', icon: <CodeLogo />, frame: 'border-transparent' },
  { label: 'Internet Explorer', icon: <ExplorerE />, frame: 'border-transparent' },
  { label: 'Brave', icon: <BraveLogo />, frame: 'border-transparent' },
  { label: 'Excel', icon: <ExcelLogo />, frame: 'border-[#d8edf8] bg-linear-to-br from-[#e6f2f9] to-[#9fcce6] outline outline-[#1d4f78]' },
  { label: 'Chrome', icon: <ChromeLogo />, frame: 'border-transparent' },
  { label: 'Windows Explorer', icon: <FolderLogo />, frame: 'border-[#a9d0ea] bg-linear-to-br from-[#9cc9e6] to-[#4790c6] outline outline-[#1d4f78]' },
  { label: 'Chrome profile A', icon: <ChromeLogo badge="A" />, frame: 'border-[#a9d0ea] bg-linear-to-br from-[#8cbfe2] to-[#3c86c3] outline outline-[#1d4f78]' },
];

const trayItems = [
  {
    label: 'Display',
    icon: <><path d="M0 2h15v10H0z" fill="#111" /><path d="M2 4h5v6H2z" fill="#3e84c9" /><path d="M5 3l4 3 2-2 2 5-3 1z" fill="#dfe9f2" /><path d="M9 12h4v3H9z" fill="#999" /></>,
  },
  {
    label: 'AnyDesk',
    icon: <><path d="M0 0h16v16H0z" fill="#ef443b" /><path d="M3 8l3-3 3 3-3 3z" fill="#fff" /><path d="M8.500 5.500L10 4.500 13.500 8 10 11.500 8.500 10.500 11 8z" fill="#fff" /></>,
  },
  {
    label: 'Power',
    icon: <><path d="M1.500 3.500h6v11h-6zM3 1.500h3v2H3z" fill="none" stroke="#fff" strokeWidth="1.500" /><path d="M7 6h8v2c0 3-2 4-3 4v3H7v-2h3v-1C8 12 7 10 7 8zM8.500 2h1.500v4H8.500zM12 2h1.500v4H12z" fill="#fff" /></>,
  },
  {
    label: 'Volume',
    icon: <><path d="M1 5h3l4-4v14l-4-4H1z" fill="#fff" /><path d="M9.500 5.500c1.500 1.500 1.500 3.500 0 5M11.500 3.500c2.500 2.500 2.500 6.500 0 9" fill="none" stroke="#dce8f2" /></>,
  },
  {
    label: 'Network',
    icon: <path d="M0 12h2v2H0zM3 10h2v4H3zM6 8h2v6H6zM9 5h2v9H9zM12 2h3v12h-3z" fill="#fff" />,
  },
  {
    label: 'Bluetooth',
    icon: <><ellipse cx="8" cy="8" rx="5.500" ry="7.500" fill="#18519a" /><path d="M5 5l6 6-3 3V2l3 3-6 6" fill="none" stroke="#fff" strokeWidth="1.300" /></>,
  },
  {
    label: 'Search tool',
    icon: <><path d="M0 0h16v15H0z" fill="#fff" /><path d="M0 3.500h5M0 7.500h3M0 11.500h16M11 3.500h5" stroke="#1b2cc0" /><circle cx="7" cy="6" r="4" fill="#d7e3ff" stroke="#111" strokeWidth="1.500" /><path d="M10 9l5 5" stroke="#111" strokeWidth="2" /></>,
  },
  {
    label: 'Action center',
    icon: <><path d="M2.500 1v14" stroke="#fff" strokeWidth="1.500" /><path d="M3 2h7v6H3zM10 4h5l-2 2.500L15 9h-5z" fill="#fff" /></>,
  },
  {
    label: 'Java',
    icon: <><rect width="16" height="16" rx="2" fill="#e8821e" /><path d="M8 2c2 2-3 3-0.500 5.500M10 4c-2 1.500-1 2 0 3.500M4 9.500h7c0 3-6 3-6 0.500M3 13c3 1 7 1 10 0" fill="none" stroke="#fff" strokeWidth="1.200" /></>,
  },
  {
    label: 'Acrobat',
    icon: <><rect width="16" height="16" rx="2" fill="#b5151b" /><path d="M3 13c3-2 5-6 5-10M7 3c0 4 3 7 6 7M4 11c3-2 6-2 9-1M10 4.500h3M10 2.500h3" fill="none" stroke="#fff" strokeWidth="1.200" /></>,
  },
];

const Taskbar = () => (
  <div className="relative flex h-10 items-center overflow-hidden border-t border-[#12324a] bg-[linear-gradient(90deg,#2a6695_0%,#3f8cc0_5%,#4ba3d3_12%,#5db2dc_24%,#4da0d4_33%,#2f84c4_46%,#2477c0_60%,#1f6ab4_71%,#1d62a8_76%,#174d86_79%,#133f72_86%,#14406f_100%)]">
    <svg viewBox="0 0 1366 39" preserveAspectRatio="none" className="absolute inset-0 h-full w-full">
      <path d="M0 0.500h1366" stroke="#9ec4dc" strokeOpacity="0.700" />
      <path d="M905 0c30 5 60 22 76 39" fill="none" stroke="#8fc0ee" strokeWidth="12" strokeOpacity="0.250" />
      <path d="M905 0c30 5 60 22 76 39" fill="none" stroke="#a9d2f6" strokeWidth="5" strokeOpacity="0.750" />
      <path d="M0 39C20 22 50 8 90 0h50C90 10 60 22 40 39z" fill="#fff" fillOpacity="0.100" />
      <path d="M105 39c10-16 20-30 34-39" fill="none" stroke="#9fe0c0" strokeWidth="3" strokeOpacity="0.250" />
      <path d="M620 24c60-4 100-14 170-24" fill="none" stroke="#8cc6ea" strokeWidth="8" strokeOpacity="0.120" />
    </svg>
    <div className="relative flex w-full items-center">
      <button aria-label="Start" className="flex w-[58px] justify-center pr-1"><StartOrb /></button>
      {taskItems.map((item) => (
        <button key={item.label} aria-label={item.label} className={`mx-[2px] flex h-[37px] w-[58px] shrink-0 items-center justify-center rounded-[2px] border ${item.frame}`}>
          {item.icon}
        </button>
      ))}
      <div className="flex-1" />
      {trayItems.map((item) => (
        <button key={item.label} aria-label={item.label} className="flex w-6 shrink-0 justify-center">
          <svg width="16" height="16" viewBox="0 0 16 16">{item.icon}</svg>
        </button>
      ))}
      <time className="w-[84px] text-center text-[12px] leading-[17px] text-white">
        3:30 PM<br />16/04/2023
      </time>
      <button aria-label="Show desktop" className="h-[38px] w-[14px] border border-[#6f93b5] bg-linear-to-b from-[#5a7fa6] to-[#1d4473]" />
    </div>
  </div>
);

export default function App() {
  return (
    <div className="flex h-screen flex-col overflow-hidden bg-white font-['Open_Sans','Noto_Sans',sans-serif]">
      <TitleBar />
      <RibbonTabs />
      <Ribbon />
      <FormulaBar />
      <main className="flex min-h-0 flex-1 bg-white">
        <div className="min-w-0 flex-1 overflow-hidden border-r border-b border-[#ababab]">
          <Sheet />
        </div>
        <VerticalScroll />
      </main>
      <SheetBar />
      <StatusBar />
      <Taskbar />
    </div>
  );
}
